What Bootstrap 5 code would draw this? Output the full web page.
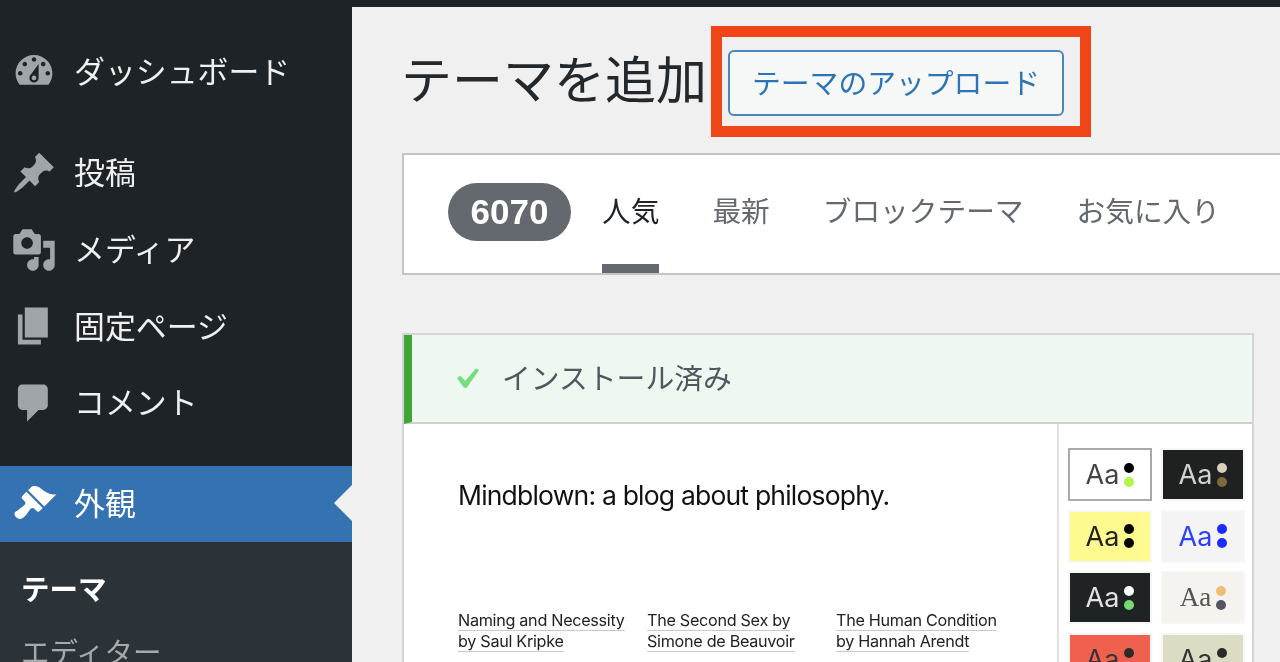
<!DOCTYPE html>
<html lang="ja">
<head>
<meta charset="utf-8">
<title>テーマを追加</title>
<link href="https://cdn.jsdelivr.net/npm/bootstrap@5.3.0/dist/css/bootstrap.min.css" rel="stylesheet">
<style>
html,body{height:662px;overflow:hidden;}
body{font-family:"Noto Sans CJK JP","Liberation Sans",sans-serif;background:#f0f0f1;color:#1d2327;}
.wp-shell{height:662px;width:1280px;filter:blur(.45px);}
.wp-side{width:352px;flex:none;background:#1d2327;padding-top:33px;}
.wp-item{height:76.8px;padding-left:11px;gap:17px;font-size:30.9px;color:#f0f0f1;position:relative;}
.wp-item span{padding-bottom:3px;}
.wp-item svg{width:46px;height:46px;fill:#a0a5aa;flex:none;}
.wp-gap{margin-top:25px;}
.wp-active{background:#3572b1;color:#fff;height:76px;}
.wp-active svg{fill:#fff;}
.wp-active::after{content:"";position:absolute;right:0;top:19px;border:18.5px solid transparent;border-left:0;border-right-color:#f0f0f1;}
.wp-sub{background:#2c3338;height:120px;padding:27px 0 0 21px;font-size:28.5px;line-height:38px;}
.wp-sub-on{color:#fff;font-weight:700;height:63px;}
.wp-sub-off{color:#a7aaad;}
.wp-main{flex:1;min-width:0;border-top:7px solid #1d2327;padding:19px 0 0 50px;}
.wp-title{font-size:51px;font-weight:400;line-height:1;margin:0 4px 8px -1px;color:#23282d;}
.wp-mark{border:11px solid #f04419;padding:13px 16px 10px 6px;width:380px;height:111px;}
.wp-upload{width:336px;height:66px;border:2px solid #4a86c0;border-radius:6px;background:#f6f7f7;color:#2e74b5;font-size:28.8px;padding:0 0 2px;}
.wp-filter{margin-top:16px;height:122px;background:#fff;border:2px solid #c3c4c7;border-right:0;padding-left:44px;}
.wp-count{width:123px;height:58px;margin:28px 31px 0 0;border-radius:29px;background:#646970;color:#fff;font-family:"Liberation Sans",sans-serif;font-weight:700;font-size:35px;}
.wp-tab{font-size:28.7px;color:#646970;margin-right:53px;border-bottom:9px solid transparent;white-space:nowrap;}
.wp-tab-on{color:#1d2327;border-bottom-color:#646970;}
.wp-card{margin:58px 26px 0 0;height:340px;border:2px solid #d3d4d6;background:#fff;}
.wp-notice{height:89px;background:#eef8f0;border-left:8px solid #3fa535;border-bottom:2px solid #cfd1d1;padding-left:33px;gap:15px;font-size:28.8px;color:#50575e;}
.wp-notice span{padding-bottom:3px;}
.wp-notice svg{width:42px;height:42px;fill:#74dd80;flex:none;}
.wp-shot{width:655px;flex:none;border-right:2px solid #e4e4e6;padding:53px 0 0 54px;font-family:Inter,"Liberation Sans",sans-serif;color:#111;}
.wp-blog{font-size:26.5px;line-height:36px;letter-spacing:-.8px;margin:0;white-space:nowrap;}
.wp-books{margin-top:97px;gap:23px;font-size:16.2px;line-height:21px;letter-spacing:-.3px;color:#222;}
.wp-books>div{width:166px;white-space:nowrap;}
.wp-books span{border-bottom:1px solid #c9c9c9;}
.wp-pal{padding:24px 0 0 9px;display:grid;grid-template-columns:84px 84px;gap:8.7px 9px;align-content:start;flex:1;}
.wp-sw{height:53px;border:2px solid #f6f6f6;gap:5px;font-family:Inter,"Liberation Sans",sans-serif;font-size:27px;line-height:1;}
.wp-sw-serif{font-family:"Liberation Serif",serif;}
.wp-dots{gap:4px;}
.wp-dots i{display:block;width:10px;height:10px;border-radius:50%;}
</style>
</head>
<body>
<div class="wp-shell d-flex">
  <nav class="wp-side d-flex flex-column">
    <div class="wp-item d-flex align-items-center"><svg viewBox="0 0 20 20"><path fill-rule="evenodd" d="M3.76 16h12.48c1.1-1.37 1.76-3.11 1.76-5 0-4.42-3.58-8-8-8s-8 3.58-8 8c0 1.89.66 3.63 1.76 5zM10 4c.55 0 1 .45 1 1s-.45 1-1 1-1-.45-1-1 .45-1 1-1zM6 6c.55 0 1 .45 1 1s-.45 1-1 1-1-.45-1-1 .45-1 1-1zm8 0c.55 0 1 .45 1 1s-.45 1-1 1-1-.45-1-1 .45-1 1-1zm-5.37 5.55L12 7v6c0 1.1-.9 2-2 2s-2-.9-2-2c0-.57.24-1.08.63-1.45zM4 10c.55 0 1 .45 1 1s-.45 1-1 1-1-.45-1-1 .45-1 1-1zm12 0c.55 0 1 .45 1 1s-.45 1-1 1-1-.45-1-1 .45-1 1-1zm-5 3c0-.55-.45-1-1-1s-1 .45-1 1 .45 1 1 1 1-.45 1-1z"/></svg><span>ダッシュボード</span></div>
    <div class="wp-item wp-gap d-flex align-items-center"><svg viewBox="0 0 20 20"><path d="M10.44 3.02l1.82-1.82 6.36 6.35-1.83 1.82c-1.05-.68-2.48-.57-3.41.36l-.75.75c-.92.93-1.04 2.35-.35 3.41l-1.83 1.82-2.41-2.41-2.8 2.79c-.42.42-3.38 2.71-3.8 2.29s1.86-3.39 2.28-3.81l2.79-2.79L4.1 9.36l1.83-1.82c1.05.69 2.48.57 3.4-.36l.75-.75c.93-.92 1.05-2.35.36-3.41z"/></svg><span>投稿</span></div>
    <div class="wp-item d-flex align-items-center"><svg viewBox="0 0 20 20"><path fill-rule="evenodd" d="M13 11V4c0-.55-.45-1-1-1h-1.67L9 1H5L3.67 3H2c-.55 0-1 .45-1 1v7c0 .55.45 1 1 1h10c.55 0 1-.45 1-1zM7 4.5c1.38 0 2.5 1.12 2.5 2.5S8.38 9.5 7 9.5 4.5 8.38 4.5 7 5.62 4.5 7 4.5zM14 6h5v10.5c0 1.38-1.12 2.5-2.5 2.5S14 17.88 14 16.5s1.12-2.5 2.5-2.5c.17 0 .34.02.5.05V9h-3V6zm-4 8.05V13h2v3.5c0 1.38-1.12 2.5-2.5 2.5S7 17.88 7 16.5 8.12 14 9.5 14c.17 0 .34.02.5.05z"/></svg><span>メディア</span></div>
    <div class="wp-item d-flex align-items-center"><svg viewBox="0 0 20 20"><path d="M6 15V2h10v13H6zm-1 1h8v2H3V5h2v11z"/></svg><span>固定ページ</span></div>
    <div class="wp-item d-flex align-items-center"><svg viewBox="0 0 20 20"><path d="M5 2h9c1.1 0 2 .9 2 2v7c0 1.1-.9 2-2 2h-2l-5 5v-5H5c-1.1 0-2-.9-2-2V4c0-1.1.9-2 2-2z"/></svg><span>コメント</span></div>
    <div class="wp-item wp-active wp-gap d-flex align-items-center"><svg viewBox="0 0 20 20"><path d="M14.48 11.06L7.41 3.99l1.5-1.5c.5-.56 2.3-.47 3.51.32 1.21.8 1.43 1.28 2.91 2.1 1.18.64 2.45 1.26 4.45.85zm-.71.71L6.7 4.7 4.93 6.47c-.39.39-.39 1.02 0 1.41l1.06 1.06c.39.39.39 1.03 0 1.42-.6.6-1.43 1.11-2.21 1.69-.35.26-.7.53-1.01.84C1.43 13.23.99 14.49 2.25 15.75s2.52.82 3.86-.52c.31-.31.58-.66.84-1.01.58-.78 1.09-1.61 1.69-2.21.39-.39 1.02-.39 1.41 0l1.06 1.06c.39.39 1.02.39 1.41 0z"/></svg><span>外観</span></div>
    <div class="wp-sub">
      <div class="wp-sub-on">テーマ</div>
      <div class="wp-sub-off">エディター</div>
    </div>
  </nav>
  <main class="wp-main">
    <div class="d-flex align-items-center">
      <h1 class="wp-title">テーマを追加</h1>
      <div class="wp-mark"><button type="button" class="btn wp-upload">テーマのアップロード</button></div>
    </div>
    <div class="wp-filter d-flex">
      <div class="wp-count d-flex align-items-center justify-content-center">6070</div>
      <div class="wp-tab wp-tab-on d-flex align-items-center">人気</div>
      <div class="wp-tab d-flex align-items-center">最新</div>
      <div class="wp-tab d-flex align-items-center">ブロックテーマ</div>
      <div class="wp-tab d-flex align-items-center">お気に入り</div>
    </div>
    <section class="wp-card">
      <div class="wp-notice d-flex align-items-center"><svg viewBox="0 0 20 20"><path d="M14.83 4.89l1.34.94-5.81 8.38H9.02L5.78 9.67l1.34-1.25 2.57 2.4z"/></svg><span>インストール済み</span></div>
      <div class="d-flex" style="height:260px">
        <div class="wp-shot">
          <p class="wp-blog">Mindblown: a blog about philosophy.</p>
          <div class="wp-books d-flex">
            <div><span>Naming and Necessity</span><br><span>by Saul Kripke</span></div>
            <div><span>The Second Sex by</span><br><span>Simone de Beauvoir</span></div>
            <div><span>The Human Condition</span><br><span>by Hannah Arendt</span></div>
          </div>
        </div>
        <div class="wp-pal">
          <div class="wp-sw d-flex align-items-center justify-content-center" style="background:#fff;border-color:#a9a9a9;color:#444"><span>Aa</span><span class="wp-dots d-flex flex-column"><i style="background:#000"></i><i style="background:#b5f54a"></i></span></div>
          <div class="wp-sw d-flex align-items-center justify-content-center" style="background:#1f2020;color:#d2d2d2"><span>Aa</span><span class="wp-dots d-flex flex-column"><i style="background:#d8cfbc"></i><i style="background:#7d6a3f"></i></span></div>
          <div class="wp-sw d-flex align-items-center justify-content-center" style="background:#fdfb8f;color:#222"><span>Aa</span><span class="wp-dots d-flex flex-column"><i style="background:#000"></i><i style="background:#000"></i></span></div>
          <div class="wp-sw d-flex align-items-center justify-content-center" style="background:#f4f4f4;color:#2a3fff"><span>Aa</span><span class="wp-dots d-flex flex-column"><i style="background:#1a2cff"></i><i style="background:#1a2cff"></i></span></div>
          <div class="wp-sw d-flex align-items-center justify-content-center" style="background:#1f2324;color:#e2e2e2"><span>Aa</span><span class="wp-dots d-flex flex-column"><i style="background:#fff"></i><i style="background:#76d873"></i></span></div>
          <div class="wp-sw wp-sw-serif d-flex align-items-center justify-content-center" style="background:#f4f3ef;color:#555"><span>Aa</span><span class="wp-dots d-flex flex-column"><i style="background:#efbd73"></i><i style="background:#555560"></i></span></div>
          <div class="wp-sw d-flex align-items-center justify-content-center" style="background:#f0604f;color:#333"><span>Aa</span><span class="wp-dots d-flex flex-column"><i style="background:#2a2a2a"></i><i style="background:#f6c0b0"></i></span></div>
          <div class="wp-sw d-flex align-items-center justify-content-center" style="background:#dcdcc4;color:#333"><span>Aa</span><span class="wp-dots d-flex flex-column"><i style="background:#2a2a2a"></i><i style="background:#2a2a2a"></i></span></div>
        </div>
      </div>
    </section>
  </main>
</div>
<script src="https://cdn.jsdelivr.net/npm/bootstrap@5.3.0/dist/js/bootstrap.bundle.min.js"></script>
</body>
</html>
